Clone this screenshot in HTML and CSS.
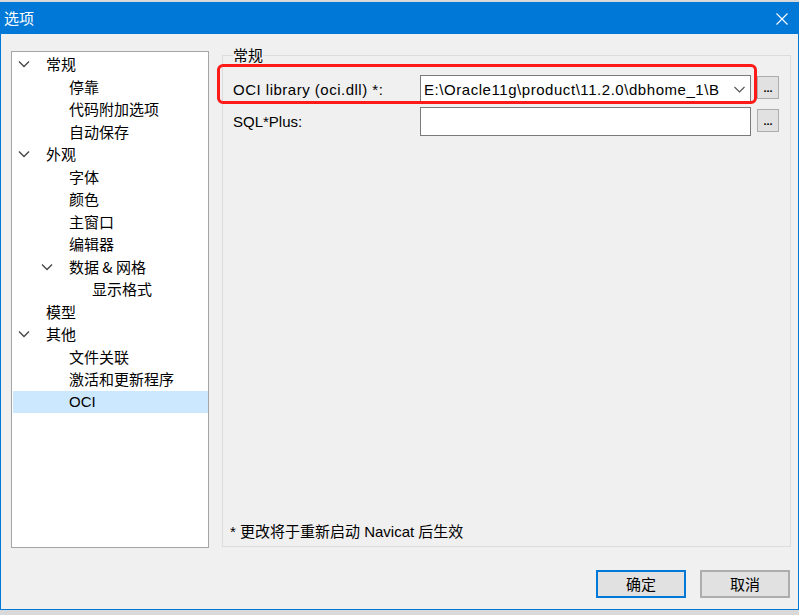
FILE: index.html
```html
<!DOCTYPE html>
<html lang="zh-CN">
<head>
<meta charset="utf-8">
<title>选项</title>
<link rel="stylesheet" href="styles.css">
</head>
<body>
<div class="window">
  <div class="titlebar">
    <span class="title">选项</span>
    <svg class="close" width="12" height="12" viewBox="0 0 12 12"><path d="M0.5 0.5 L11.5 11.5 M11.5 0.5 L0.5 11.5" stroke="#fff" stroke-width="1.1" fill="none"/></svg>
  </div>
  <div class="main">
    <div class="tree">
      <div class="item l0"><span class="tog"><svg width="12" height="8" viewBox="0 0 12 8"><path d="M1 1.5 L6 6.5 L11 1.5" stroke="#444" stroke-width="1.3" fill="none"/></svg></span>常规</div>
      <div class="item l1"><span class="tog"></span>停靠</div>
      <div class="item l1"><span class="tog"></span>代码附加选项</div>
      <div class="item l1"><span class="tog"></span>自动保存</div>
      <div class="item l0"><span class="tog"><svg width="12" height="8" viewBox="0 0 12 8"><path d="M1 1.5 L6 6.5 L11 1.5" stroke="#444" stroke-width="1.3" fill="none"/></svg></span>外观</div>
      <div class="item l1"><span class="tog"></span>字体</div>
      <div class="item l1"><span class="tog"></span>颜色</div>
      <div class="item l1"><span class="tog"></span>主窗口</div>
      <div class="item l1"><span class="tog"></span>编辑器</div>
      <div class="item l1"><span class="tog"><svg width="12" height="8" viewBox="0 0 12 8"><path d="M1 1.5 L6 6.5 L11 1.5" stroke="#444" stroke-width="1.3" fill="none"/></svg></span>数据 &amp; 网格</div>
      <div class="item l2"><span class="tog"></span>显示格式</div>
      <div class="item l0"><span class="tog"></span>模型</div>
      <div class="item l0"><span class="tog"><svg width="12" height="8" viewBox="0 0 12 8"><path d="M1 1.5 L6 6.5 L11 1.5" stroke="#444" stroke-width="1.3" fill="none"/></svg></span>其他</div>
      <div class="item l1"><span class="tog"></span>文件关联</div>
      <div class="item l1"><span class="tog"></span>激活和更新程序</div>
      <div class="item l1 selected"><span class="tog"></span>OCI</div>
    </div>
    <fieldset class="group">
      <legend>常规</legend>
      <div class="rows">
        <div class="row first">
          <span class="label wide">OCI library (oci.dll) *:</span>
          <div class="combo">
            <span class="combo-text">E:\Oracle11g\product\11.2.0\dbhome_1\B</span>
            <svg class="combo-arrow" width="11" height="7" viewBox="0 0 11 7"><path d="M0.5 1 L5.5 6 L10.5 1" stroke="#555" stroke-width="1.1" fill="none"/></svg>
          </div>
          <button class="dots">...</button>
          <div class="mark"></div>
        </div>
        <div class="row">
          <span class="label">SQL*Plus:</span>
          <div class="textbox"></div>
          <button class="dots">...</button>
        </div>
      </div>
      <div class="note">* 更改将于重新启动 Navicat 后生效</div>
    </fieldset>
  </div>
  <div class="footer">
    <button class="btn default">确定</button>
    <button class="btn">取消</button>
  </div>
</div>
</body>
</html>
```

FILE: styles.css
```css
* { box-sizing: border-box; }
html, body { margin: 0; padding: 0; }
body {
  background: #d9d9d9;
  width: 799px;
  height: 615px;
  overflow: hidden;
  padding-top: 2px;
  font-family: "Liberation Sans", "Noto Sans CJK SC", sans-serif;
  font-size: 15px;
  color: #000;
}
.window {
  width: 799px;
  height: 608px;
  background: #f0f0f0;
  border: 1px solid #0078d7;
  border-top: 0;
  display: flex;
  flex-direction: column;
}
.titlebar {
  height: 32px;
  background: #0078d7;
  display: flex;
  align-items: center;
  padding: 0 11px 0 4px;
  margin: 0 -1px;
}
.title {
  color: #fff;
  font-family: "Noto Sans CJK SC", sans-serif;
  font-size: 15px;
  flex: 1;
  line-height: 20px;
  padding-bottom: 1px;
}
.close { display: block; margin-top: 1px; }
.main {
  display: flex;
  padding: 11px 7px 0 10px;
  gap: 13px;
}
.tree {
  margin-top: 6px;
  width: 198px;
  height: 497px;
  background: #fff;
  border: 1px solid #a5a5a5;
  padding-top: 1px;
  font-family: "Noto Sans CJK SC", sans-serif;
}
.item {
  height: 22.5px;
  display: flex;
  align-items: center;
  white-space: nowrap;
  line-height: 20px;
}
.item.l0 { padding-left: 6px; }
.item.l1 { padding-left: 29px; }
.item.l2 { padding-left: 52px; }
.tog {
  width: 28px;
  flex: none;
  display: flex;
  align-items: center;
}
.tog svg { display: block; }
.item.selected {
  background: #cce8ff;
  margin-left: 1px;
  padding-left: 28px;
  font-family: "Liberation Sans", sans-serif;
}
.group {
  margin: 0;
  width: 569px;
  height: 502px;
  border: 1px solid #dcdcdc;
  padding: 0 10px 4px 10px;
  display: flex;
  flex-direction: column;
  min-width: 0;
}
.group legend {
  padding: 0;
  font-family: "Noto Sans CJK SC", sans-serif;
  font-size: 15px;
  line-height: 20px;
}
.rows {
  display: flex;
  flex-direction: column;
  gap: 3px;
  padding-top: 10px;
}
.row {
  display: grid;
  grid-template-columns: 181px 331px 22px;
  column-gap: 6px;
  height: 29px;
  align-items: center;
  position: relative;
}
.label { white-space: nowrap; line-height: 20px; }
.label.wide { letter-spacing: 0.5px; }
.combo, .textbox {
  height: 29px;
  background: #fff;
  border: 1px solid #7a7a7a;
}
.combo {
  display: flex;
  align-items: center;
  padding: 0 5px 0 3px;
  overflow: hidden;
}
.combo-text {
  flex: 1;
  white-space: nowrap;
  overflow: hidden;
  min-width: 0;
  line-height: 20px;
  letter-spacing: 0.55px;
}
.combo-arrow { display: block; flex: none; margin-left: 6px; }
.dots {
  align-self: start;
  margin-top: 1px;
  width: 22px;
  height: 23px;
  padding: 0 0 4px;
  background: #e1e1e1;
  border: 1px solid #adadad;
  font-family: "Liberation Sans", sans-serif;
  font-size: 11px;
  font-weight: bold;
  line-height: 1;
  display: flex;
  align-items: flex-end;
  justify-content: center;
  color: #000;
}
.row + .row .dots { margin-top: 2px; }
.mark {
  position: absolute;
  left: -16px;
  top: -11px;
  width: 540px;
  height: 40px;
  border: 3px solid #ff1a1a;
  border-radius: 6px;
  pointer-events: none;
}
.note {
  margin-top: auto;
  font-family: "Liberation Sans", "Noto Sans CJK SC", sans-serif;
  line-height: 20px;
  margin-left: -3px;
}
.footer {
  display: flex;
  justify-content: flex-end;
  gap: 14px;
  padding: 22px 8px 0 0;
}
.btn {
  width: 90px;
  height: 28px;
  background: #e1e1e1;
  border: 2px solid #adadad;
  font-family: "Noto Sans CJK SC", sans-serif;
  font-size: 15px;
  color: #000;
  padding: 0;
  line-height: 20px;
}
.btn.default { border-color: #0078d7; }
```
